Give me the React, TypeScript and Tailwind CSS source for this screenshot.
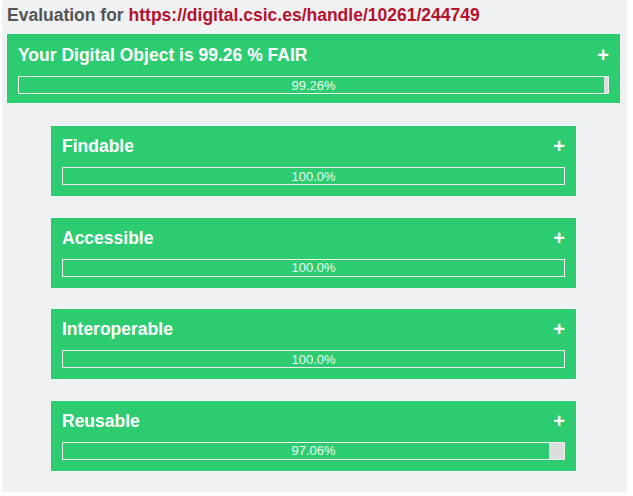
const SECTIONS = [
  { name: "Findable", score: 100.0, label: "100.0%" },
  { name: "Accessible", score: 100.0, label: "100.0%" },
  { name: "Interoperable", score: 100.0, label: "100.0%" },
  { name: "Reusable", score: 97.06, label: "97.06%" },
];

function Bar({ score, label }: { score: number; label: string }) {
  return (
    <div className="relative flex h-[18px] w-full border border-white/50 bg-[#dddddd]">
      <div className="h-full bg-[#2ecc71]" style={{ width: `${score}%` }} />
      <span className="absolute inset-0 flex items-center justify-center text-[13px] leading-none text-white/90">
        {label}
      </span>
    </div>
  );
}

function Card({ title, score, label, big }: { title: string; score: number; label: string; big?: boolean }) {
  return (
    <div className={`bg-[#2ecc71] px-[11px] ${big ? "pb-[9px] pt-[9px]" : "pb-[11px] pt-[8px]"}`}>
      <div className="flex h-[24px] items-center justify-between">
        <span className="text-[17.5px] font-bold leading-[24px] text-white">{title}</span>
        <span className="text-[20px] font-bold leading-none text-white">+</span>
      </div>
      <div className="mt-[9px]">
        <Bar score={score} label={label} />
      </div>
    </div>
  );
}

export default function App() {
  return (
    <div className="h-[496px] w-[633px] bg-white" style={{ fontFamily: '"Liberation Sans", Arial, sans-serif' }}>
      <div className="ml-[2px] h-[492px] w-[625px] bg-[#f0f1f3] pl-[5px] pr-[7px]">
        <h1 className="pt-[3px] text-[17.5px] font-bold leading-[24px] text-[#555555]">
          Evaluation for <span className="text-[#b5122d]">https://digital.csic.es/handle/10261/244749</span>
        </h1>
        <div className="mt-[7px]">
          <Card title="Your Digital Object is 99.26 % FAIR" score={99.26} label="99.26%" big />
        </div>
        <div className="ml-[44px] mt-[23px] flex w-[525px] flex-col gap-[21.6px]">
          {SECTIONS.map((s) => (
            <Card key={s.name} title={s.name} score={s.score} label={s.label} />
          ))}
        </div>
      </div>
    </div>
  );
}
